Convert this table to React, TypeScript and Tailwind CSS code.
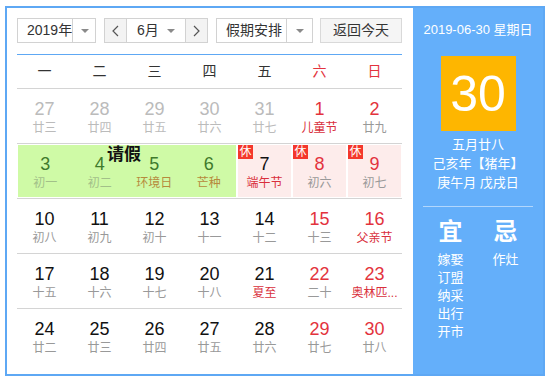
import React from "react";

type Day = { d: string; l: string; dc: string; lc: string };

const GREY = "text-[#bbb]";
const BLACK = "text-[#111]";
const RED = "text-[#e3333d]";
const LUNAR = "text-[#999]";
const FEST = "text-[#d9303c]";

const rows: Day[][] = [
  [
    { d: "27", l: "廿三", dc: GREY, lc: GREY },
    { d: "28", l: "廿四", dc: GREY, lc: GREY },
    { d: "29", l: "廿五", dc: GREY, lc: GREY },
    { d: "30", l: "廿六", dc: GREY, lc: GREY },
    { d: "31", l: "廿七", dc: GREY, lc: GREY },
    { d: "1", l: "儿童节", dc: RED, lc: FEST },
    { d: "2", l: "廿九", dc: RED, lc: LUNAR },
  ],
  [
    { d: "10", l: "初八", dc: BLACK, lc: LUNAR },
    { d: "11", l: "初九", dc: BLACK, lc: LUNAR },
    { d: "12", l: "初十", dc: BLACK, lc: LUNAR },
    { d: "13", l: "十一", dc: BLACK, lc: LUNAR },
    { d: "14", l: "十二", dc: BLACK, lc: LUNAR },
    { d: "15", l: "十三", dc: RED, lc: LUNAR },
    { d: "16", l: "父亲节", dc: RED, lc: FEST },
  ],
  [
    { d: "17", l: "十五", dc: BLACK, lc: LUNAR },
    { d: "18", l: "十六", dc: BLACK, lc: LUNAR },
    { d: "19", l: "十七", dc: BLACK, lc: LUNAR },
    { d: "20", l: "十八", dc: BLACK, lc: LUNAR },
    { d: "21", l: "夏至", dc: BLACK, lc: FEST },
    { d: "22", l: "二十", dc: RED, lc: LUNAR },
    { d: "23", l: "奥林匹...", dc: RED, lc: FEST },
  ],
  [
    { d: "24", l: "廿二", dc: BLACK, lc: LUNAR },
    { d: "25", l: "廿三", dc: BLACK, lc: LUNAR },
    { d: "26", l: "廿四", dc: BLACK, lc: LUNAR },
    { d: "27", l: "廿五", dc: BLACK, lc: LUNAR },
    { d: "28", l: "廿六", dc: BLACK, lc: LUNAR },
    { d: "29", l: "廿七", dc: RED, lc: LUNAR },
    { d: "30", l: "廿八", dc: RED, lc: LUNAR },
  ],
];

const leave: Day[] = [
  { d: "3", l: "初一", dc: "text-[#3f7a2c]", lc: "text-[#a2c089]" },
  { d: "4", l: "初二", dc: "text-[#3f7a2c]", lc: "text-[#a2c089]" },
  { d: "5", l: "环境日", dc: "text-[#3f7a2c]", lc: "text-[#b68a3c]" },
  { d: "6", l: "芒种", dc: "text-[#3f7a2c]", lc: "text-[#b68a3c]" },
];

const rest: Day[] = [
  { d: "7", l: "端午节", dc: BLACK, lc: FEST },
  { d: "8", l: "初六", dc: RED, lc: LUNAR },
  { d: "9", l: "初七", dc: RED, lc: LUNAR },
];

function DayCell({ day, pt = "pt-[9px]" }: { day: Day; pt?: string }) {
  return (
    <div className={`flex flex-col items-center ${pt}`}>
      <span className={`text-[18px] leading-[22px] ${day.dc}`}>{day.d}</span>
      <span className={`text-[12px] leading-[16px] whitespace-nowrap ${day.lc}`}>{day.l}</span>
    </div>
  );
}

function Caret() {
  return <span className="w-0 h-0 border-x-[4px] border-t-[4px] border-x-transparent border-t-[#8a8a8a]" />;
}

function Chevron({ dir }: { dir: "left" | "right" }) {
  return (
    <svg width="7" height="12" viewBox="0 0 7 12">
      <polyline
        points={dir === "left" ? "6,1 1,6 6,11" : "1,1 6,6 1,11"}
        fill="none"
        stroke="#555"
        strokeWidth="1.2"
      />
    </svg>
  );
}

export default function App() {
  const week = ["一", "二", "三", "四", "五", "六", "日"];
  return (
    <div className="font-['Liberation_Sans','Noto_Sans_CJK_SC',sans-serif] pt-[6px] pl-[5px]">
      <div className="flex w-[540px] h-[370px] border-2 border-[#5ea8f4] bg-white">
        {/* left: calendar */}
        <div className="w-[406px] pt-[10px] pl-[10px] pr-[11px]">
          <div className="flex h-[25px] text-[14px] text-[#333] whitespace-nowrap">
            <div className="flex w-[79px] border border-[#d2d2d2]">
              <span className="flex-1 flex items-center pl-[9px]">2019年</span>
              <span className="w-[24px] shrink-0 flex items-center justify-center border-l border-[#d2d2d2]">
                <Caret />
              </span>
            </div>
            <div className="flex w-[104px] ml-[8px] border border-[#d2d2d2]">
              <span className="w-[22px] flex items-center justify-center bg-[#f3f3f3] border-r border-[#d2d2d2]">
                <Chevron dir="left" />
              </span>
              <span className="flex-1 flex items-center justify-between pl-[10px] pr-[10px]">
                6月
                <Caret />
              </span>
              <span className="w-[22px] flex items-center justify-center bg-[#f3f3f3] border-l border-[#d2d2d2]">
                <Chevron dir="right" />
              </span>
            </div>
            <div className="flex w-[97px] ml-[8px] border border-[#d2d2d2]">
              <span className="flex-1 flex items-center pl-[9px]">假期安排</span>
              <span className="w-[26px] shrink-0 flex items-center justify-center border-l border-[#d2d2d2]">
                <Caret />
              </span>
            </div>
            <button className="w-[82px] ml-[7px] border border-[#d9d9d9] bg-[#f5f5f5] text-[14px] text-[#333]">
              返回今天
            </button>
          </div>

          <div className="mt-[11px] grid grid-cols-7 h-[35px] border-t border-b border-t-[#5ea8f4] border-b-[#d4d4d4] text-[14px]">
            {week.map((w, i) => (
              <div key={w} className={`flex items-center justify-center ${i > 4 ? "text-[#e3333d]" : "text-[#333]"}`}>
                {w}
              </div>
            ))}
          </div>

          {/* row 1 */}
          <div className="grid grid-cols-7 h-[55px] border-b border-[#d4d4d4]">
            {rows[0].map((d, i) => (
              <DayCell key={i} day={d} />
            ))}
          </div>

          {/* row 2: leave + holiday */}
          <div className="grid grid-cols-7 h-[55px] border-b border-[#d4d4d4]">
            <div className="col-span-4 relative m-[1px] bg-[#cffaa6] grid grid-cols-4">
              {leave.map((d, i) => (
                <DayCell key={i} day={d} pt="pt-[8px]" />
              ))}
              <span className="absolute top-0 left-[89px] text-[17px] leading-[20px] font-bold text-[#111]">请假</span>
            </div>
            {rest.map((d, i) => (
              <div key={i} className="relative m-[1px] bg-[#fdeceb]">
                <span className="absolute top-0 left-0 w-[15px] h-[14px] bg-[#f4372c] text-white text-[12px] leading-[14px] text-center">
                  休
                </span>
                <DayCell day={d} pt="pt-[8px]" />
              </div>
            ))}
          </div>

          {rows.slice(1).map((r, ri) => (
            <div key={ri} className={`grid grid-cols-7 h-[55px] ${ri < 2 ? "border-b border-[#d4d4d4]" : ""}`}>
              {r.map((d, i) => (
                <DayCell key={i} day={d} />
              ))}
            </div>
          ))}
        </div>

        {/* right: today panel */}
        <div className="w-[130px] bg-[#64affa] flex flex-col items-center text-white">
          <div className="mt-[12px] text-[13px] leading-[20px]">2019-06-30 星期日</div>
          <div className="mt-[16px] w-[75px] h-[75px] bg-[#feb600] flex items-center justify-center text-[50px] leading-none">
            30
          </div>
          <div className="mt-[4px] text-[13px] leading-[19px] text-center">
            <div>五月廿八</div>
            <div>己亥年【猪年】</div>
            <div>庚午月 戊戌日</div>
          </div>
          <div className="mt-[14px] w-[110px] h-px bg-white/50" />
          <div className="grid grid-cols-2 w-[110px] mt-[11px]">
            <div className="flex flex-col items-center">
              <span className="text-[24px] leading-[28px] font-bold">宜</span>
              <div className="mt-[5px] text-[13px] leading-[18px] flex flex-col items-center">
                <span>嫁娶</span>
                <span>订盟</span>
                <span>纳采</span>
                <span>出行</span>
                <span>开市</span>
              </div>
            </div>
            <div className="flex flex-col items-center">
              <span className="text-[24px] leading-[28px] font-bold">忌</span>
              <div className="mt-[5px] text-[13px] leading-[18px] flex flex-col items-center">
                <span>作灶</span>
              </div>
            </div>
          </div>
        </div>
      </div>
    </div>
  );
}
